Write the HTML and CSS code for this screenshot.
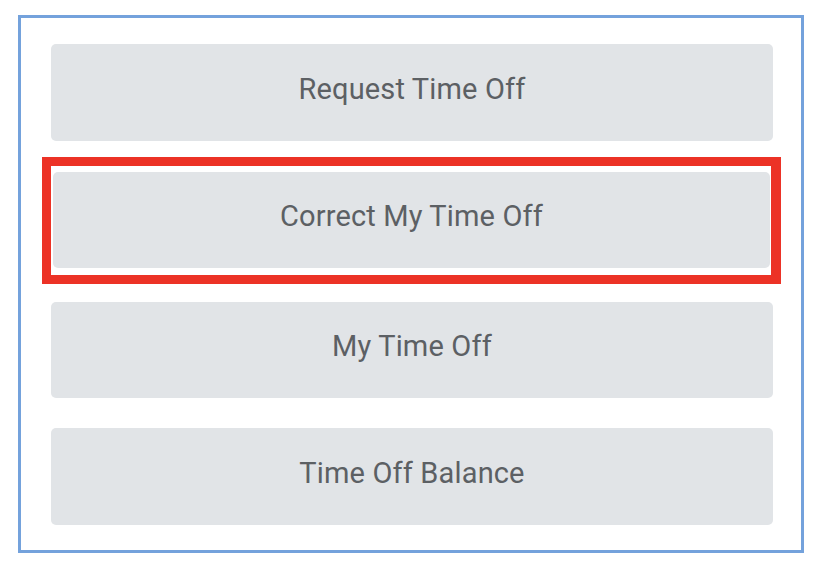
FILE: index.html
```html
<!DOCTYPE html>
<html>
<head>
<meta charset="utf-8">
<link rel="stylesheet" href="styles.css">
</head>
<body>
<div class="frame">
  <div class="btn btn-first">Request Time Off</div>
  <div class="highlight">
    <div class="btn btn-inner">Correct My Time Off</div>
  </div>
  <div class="btn btn-third">My Time Off</div>
  <div class="btn btn-last">Time Off Balance</div>
</div>
</body>
</html>
```

FILE: styles.css
```css
html, body {
  margin: 0;
  padding: 0;
  background: #ffffff;
}

body {
  width: 832px;
  height: 568px;
  overflow: hidden;
  font-family: Roboto, "Liberation Sans", sans-serif;
}

.frame {
  box-sizing: border-box;
  margin: 15px 0 0 18px;
  width: 786px;
  height: 538px;
  border: 3px solid #74a2dc;
  padding: 26px 28px 25px 30px;
  display: flex;
  flex-direction: column;
}

.btn {
  box-sizing: border-box;
  width: 722px;
  height: 97px;
  background: #e1e4e7;
  border-radius: 5px;
  display: flex;
  align-items: center;
  justify-content: center;
  padding-bottom: 8px;
  font-size: 29px;
  letter-spacing: 0.15px;
  color: #5c6064;
  flex: none;
}

.highlight {
  box-sizing: border-box;
  margin: 16px 0 0 -9px;
  width: 739px;
  height: 127px;
  border-style: solid;
  border-color: #ec3226;
  border-width: 9px 10px 9px 9px;
  padding: 6px 1px 7px 2px;
  background: #ffffff;
  flex: none;
}

.btn-inner {
  width: 717px;
  height: 96px;
}

.btn-third {
  margin-top: 18px;
  height: 96px;
}

.btn-last {
  margin-top: 30px;
}
```
